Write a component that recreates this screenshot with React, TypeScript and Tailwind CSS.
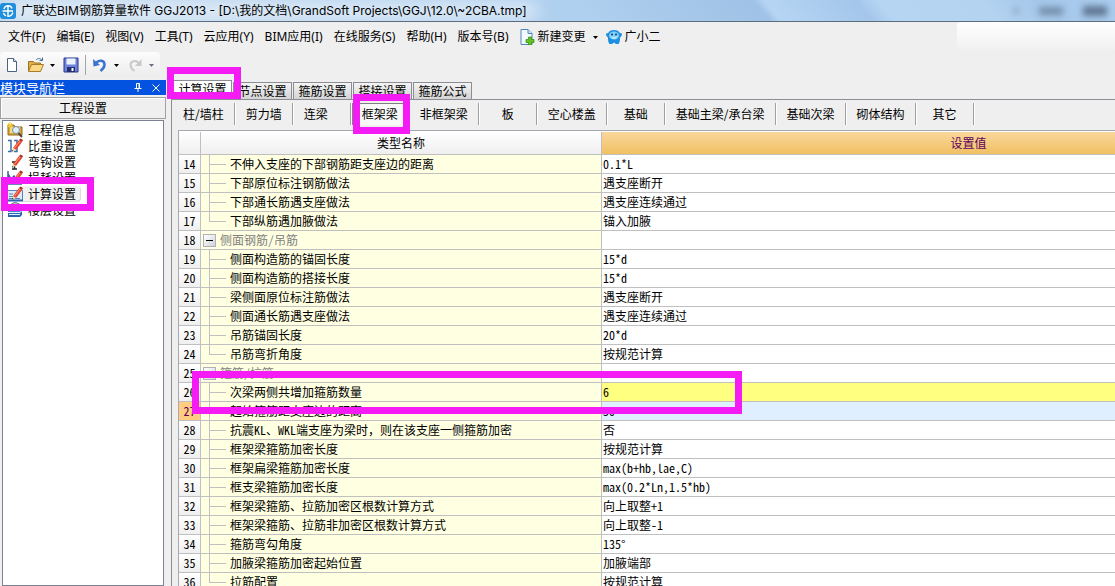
import type { ReactNode } from "react";
import clsx from "clsx";

interface Row {
  no: number;
  name: string;
  value: string;
  kind?: "group" | "last";
}

const menus = [
  "文件(F)",
  "编辑(E)",
  "视图(V)",
  "工具(T)",
  "云应用(Y)",
  "BIM应用(I)",
  "在线服务(S)",
  "帮助(H)",
  "版本号(B)",
];

const tabs = ["计算设置", "节点设置", "箍筋设置", "搭接设置", "箍筋公式"];

const members = [
  "柱/墙柱",
  "剪力墙",
  "连梁",
  "框架梁",
  "非框架梁",
  "板",
  "空心楼盖",
  "基础",
  "基础主梁/承台梁",
  "基础次梁",
  "砌体结构",
  "其它",
];

const rows: Row[] = [
  { no: 14, name: "不伸入支座的下部钢筋距支座边的距离", value: "0.1*L" },
  { no: 15, name: "下部原位标注钢筋做法", value: "遇支座断开" },
  { no: 16, name: "下部通长筋遇支座做法", value: "遇支座连续通过" },
  { no: 17, name: "下部纵筋遇加腋做法", value: "锚入加腋", kind: "last" },
  { no: 18, name: "侧面钢筋/吊筋", value: "", kind: "group" },
  { no: 19, name: "侧面构造筋的锚固长度", value: "15*d" },
  { no: 20, name: "侧面构造筋的搭接长度", value: "15*d" },
  { no: 21, name: "梁侧面原位标注筋做法", value: "遇支座断开" },
  { no: 22, name: "侧面通长筋遇支座做法", value: "遇支座连续通过" },
  { no: 23, name: "吊筋锚固长度", value: "20*d" },
  { no: 24, name: "吊筋弯折角度", value: "按规范计算", kind: "last" },
  { no: 25, name: "箍筋/拉筋", value: "", kind: "group" },
  { no: 26, name: "次梁两侧共增加箍筋数量", value: "6" },
  { no: 27, name: "起始箍筋距支座边的距离", value: "50" },
  { no: 28, name: "抗震KL、WKL端支座为梁时，则在该支座一侧箍筋加密", value: "否" },
  { no: 29, name: "框架梁箍筋加密长度", value: "按规范计算" },
  { no: 30, name: "框架扁梁箍筋加密长度", value: "max(b+hb,lae,C)" },
  { no: 31, name: "框支梁箍筋加密长度", value: "max(0.2*Ln,1.5*hb)" },
  { no: 32, name: "框架梁箍筋、拉筋加密区根数计算方式", value: "向上取整+1" },
  { no: 33, name: "框架梁箍筋、拉筋非加密区根数计算方式", value: "向上取整-1" },
  { no: 34, name: "箍筋弯勾角度", value: "135°" },
  { no: 35, name: "加腋梁箍筋加密起始位置", value: "加腋端部" },
  { no: 36, name: "拉筋配置", value: "按规范计算", kind: "last" },
];

const Pencil = () => (
  <>
    <path d="M6 10 L12 2 L15 4 L9 12 Z" fill="#e8452c" />
    <path d="M12 2 L13.5 .5 L16 2 L15 4 Z" fill="#b02a20" />
    <path d="M7.5 10 L13 3" stroke="#ff9a7a" />
    <path d="M6 10 L5 13.500 L9 12 Z" fill="#f4d9a8" />
    <path d="M5 13.500 L5.500 11.800 L6.500 12.900 Z" fill="#222" />
  </>
);

const navItems: { label: string; icon: ReactNode }[] = [
  {
    label: "工程信息",
    icon: (
      <>
        <path d="M1 3h6l1 2h7v8H1z" fill="#d9a93c" stroke="#8f6b1b" />
        <path d="M3 5h10v6H3z" fill="#f3d98b" />
        <path d="M3 0v6M0 3h6M1 1l4 4M5 1L1 5" stroke="#f5d13a" />
        <circle cx="9" cy="8" r="3.500" fill="#dff0fb" stroke="#7790a8" />
        <path d="M11.500 11l3.500 4" stroke="#5b4a3a" strokeWidth="2" />
      </>
    ),
  },
  {
    label: "比重设置",
    icon: (
      <>
        <path
          d="M1 2.500h3v11H1M7 2.500h3v11H7"
          fill="none"
          stroke="#3b6ea8"
          strokeWidth="1.500"
        />
        <Pencil />
      </>
    ),
  },
  {
    label: "弯钩设置",
    icon: (
      <>
        <path
          d="M5 8h5M7.500 8v7M5 15h5"
          fill="none"
          stroke="#222"
          strokeWidth="1.500"
        />
        <Pencil />
      </>
    ),
  },
  {
    label: "损耗设置",
    icon: (
      <>
        <path
          d="M1 1v13h14M1 4l3 5 3-3 3 6 5-3"
          fill="none"
          stroke="#3b5fa8"
          strokeWidth="1.500"
        />
        <Pencil />
      </>
    ),
  },
  {
    label: "计算设置",
    icon: (
      <>
        <path d="M.5 4.500h15v10H.5z" fill="#dcebfa" stroke="#5584c0" />
        <path d="M2 8h4M2 10.500h8M2 12.500h11" stroke="#5584c0" />
        <path d="M0 14.500h16" stroke="#2e63ad" strokeWidth="2" />
        <Pencil />
      </>
    ),
  },
  {
    label: "楼层设置",
    icon: (
      <>
        <path d="M3 3l5-3 6 3v3H3z" fill="#b9c4cf" stroke="#6b7785" />
        <path d="M1 7h12l2-2v3l-2 2H1z" fill="#3f86cf" />
        <path d="M1 11h12l2-2v4l-2 2H1z" fill="#2765b0" />
        <path d="M2 10.500h11M2 12.500h11" stroke="#e5f1fc" />
      </>
    ),
  },
];

const Icon = ({ children }: { children: ReactNode }) => (
  <svg viewBox="0 0 16 16" className="size-4 shrink-0" aria-hidden="true">
    {children}
  </svg>
);

const Caret = ({ muted }: { muted?: boolean }) => (
  <svg
    viewBox="0 0 5 3"
    className={clsx("h-[3px] w-[5px]", muted ? "text-gray-500" : "text-black")}
    aria-hidden="true"
  >
    <path d="M0 0h5L2.500 3z" fill="currentColor" />
  </svg>
);

const TitleBar = () => (
  <header className="relative flex h-[22px] shrink-0 items-center overflow-hidden border-b border-[#5d6b7e] bg-linear-to-r from-[#c3d9ee] via-[#b0d0ef] to-[#abcbea]">
    <div className="absolute inset-0 bg-[linear-gradient(50deg,transparent_52%,#9fc2e6_68%,#b6d5f3_69%,#a3c6ea_77%,#b6d5f3_79%,#b4d3f1_88%,#a5c7e9_93%,#aaccee_100%)]" />
    <div className="absolute left-2 h-4 w-[530px] rounded-full bg-white/60 blur-sm" />
    <svg viewBox="0 0 16 16" className="relative size-4" aria-hidden="true">
      <rect width="16" height="16" rx="3" fill="#1f8fdc" />
      <path
        d="M13 9.500C12 12 10 13.300 8 13.300V2.500M2.500 8h10.500M4 6C4.500 4 6 2.700 8 2.700S11.500 4 12 5.500M3.500 10c.5 1.300 1.500 2.300 2.500 2.800"
        fill="none"
        stroke="#fff"
        strokeWidth="1.400"
      />
    </svg>
    <h1 className="relative ml-[5px] font-['Inter','Noto_Sans_CJK_SC',sans-serif] text-xs whitespace-pre">
      广联达BIM钢筋算量软件 GGJ2013 - [D:\我的文档\GrandSoft Projects\GGJ\12.0\~2CBA.tmp]
    </h1>
    <div className="relative mr-2 ml-auto flex items-center gap-5 blur-[3px]">
      <span className="size-1.5 bg-slate-500/40" />
      <span className="h-2 w-6 bg-slate-600/50" />
      <span className="h-2.5 w-6 bg-slate-700/60" />
    </div>
  </header>
);

const MenuBar = () => (
  <nav className="flex h-[30px] shrink-0 items-center pl-2 text-xs">
    <div className="flex gap-[11px]">
      {menus.map((m) => (
        <button key={m} type="button" className="whitespace-nowrap">
          {m}
        </button>
      ))}
    </div>
    <button type="button" className="ml-2.5 flex items-center gap-[3px] whitespace-nowrap">
      <Icon>
        <path d="M2 .5h7l4 4v11H2z" fill="#f4faff" stroke="#4d86c0" />
        <path d="M9 .5v4h4" fill="#cfe3f6" stroke="#4d86c0" />
        <path
          d="M9.500 8h3v2.500H15v3h-2.500V16h-3v-2.500H7v-3h2.500z"
          fill="#63c421"
          stroke="#2e8a12"
          strokeWidth=".7"
        />
      </Icon>
      新建变更
      <span className="ml-1">
        <Caret />
      </span>
    </button>
    <button type="button" className="ml-2 flex items-center gap-[3px] whitespace-nowrap">
      <Icon>
        <path
          d="M8 1c3 0 5 1 5.800 3L16 4.500c0 2-.8 3.500-2 4 0 2 .2 4-1.500 6.500H10l-2-1.500L6 15H3.500C1.800 12.500 2 10.500 2 8.500.8 8 0 6.500 0 4.500L2.200 4C3 2 5 1 8 1z"
          fill="#1e8fe0"
        />
        <ellipse cx="8" cy="6.500" rx="5" ry="4" fill="#7fd0fa" />
        <circle cx="6" cy="5.500" r="1" fill="#0b3c70" />
        <circle cx="10" cy="5.500" r="1" fill="#0b3c70" />
        <path d="M5.500 8c1.500 1.500 3.500 1.500 5 0" fill="none" stroke="#fff" />
      </Icon>
      广小二
    </button>
    <div className="ml-auto h-full w-[158px] rounded-tl bg-linear-to-b from-white to-[#efefef]" />
  </nav>
);

const ToolBar = () => (
  <div className="flex h-7 shrink-0 items-start">
    <div className="flex h-[26px] w-40 items-center rounded bg-linear-to-b from-[#fcfcfc] to-[#ececec] pl-1">
      <button type="button" aria-label="新建">
        <Icon>
          <path d="M3.500 1.500h6l3 3v10h-9z" fill="#fff" stroke="#4b6285" />
          <path d="M9.500 1.500v3h3" fill="#dbe6f5" stroke="#4b6285" />
        </Icon>
      </button>
      <button type="button" aria-label="打开" className="ml-2 flex items-center gap-1.5">
        <Icon>
          <path d="M.5 4.500h5l1 1.500h6v8H.5z" fill="#e3b04b" stroke="#9a7220" />
          <path d="M.5 14.500l3-7h12l-3 7z" fill="#fbd984" stroke="#a87c28" />
          <path d="M8 3c2-2 4-2 6 0M14.500.5v3h-3" fill="none" stroke="#47688f" />
        </Icon>
        <Caret />
      </button>
      <button type="button" aria-label="保存" className="ml-2">
        <Icon>
          <path d="M1 1h14v14H1z" fill="#6f83dc" stroke="#27358c" />
          <path d="M3.500 1.500h9v6h-9z" fill="#eef2fc" />
          <path d="M4 10h8v5H4z" fill="#23306f" />
          <path d="M8.500 11h2v3h-2z" fill="#fff" />
        </Icon>
      </button>
      <span className="mx-1.5 h-5 w-px bg-[#a5a5a5]" />
      <button type="button" aria-label="撤销" className="flex items-center gap-1.5">
        <Icon>
          <path
            d="M4 6C6.500 2.500 12.500 3 12.500 7.500c0 3-2 5-4 6.500"
            fill="none"
            stroke="#3b74cf"
            strokeWidth="2.500"
          />
          <path d="M1 2l.5 7.500L8 8z" fill="#3b74cf" />
        </Icon>
        <Caret />
      </button>
      <button
        type="button"
        aria-label="恢复"
        disabled
        className="ml-2 flex items-center gap-1.5"
      >
        <Icon>
          <path
            d="M11.500 6C9 3 3.500 3.500 3.500 8c0 2.500 2 4.500 4 6"
            fill="none"
            stroke="#c9c9c9"
            strokeWidth="2"
          />
          <path d="M14.500 2v7H8z" fill="#c9c9c9" />
        </Icon>
        <Caret muted />
      </button>
    </div>
  </div>
);

const Sidebar = () => (
  <aside className="flex w-[166px] shrink-0 flex-col">
    <div className="flex h-[15px] shrink-0 items-center bg-[#0453e0] text-[13px] leading-none text-white">
      <h2 className="mr-auto">模块导航栏</h2>
      <button type="button" aria-label="固定" className="mr-2.5">
        <svg viewBox="0 0 8 9" className="h-[9px] w-2" aria-hidden="true">
          <path
            d="M2.500 5V.5h3V5M5 .5V5M.5 5.500h7M4 5.500V9"
            fill="none"
            stroke="#fff"
          />
        </svg>
      </button>
      <button type="button" aria-label="关闭" className="mr-1.5">
        <svg viewBox="0 0 8 8" className="size-2" aria-hidden="true">
          <path d="M.5.5l7 7M7.500.5l-7 7" stroke="#fff" />
        </svg>
      </button>
    </div>
    <button
      type="button"
      className="mt-0.5 h-[22px] shrink-0 border border-[#a0a0a0] bg-[#efefef] text-xs shadow-[inset_1px_1px_0_#fff]"
    >
      工程设置
    </button>
    <ul className="mx-0.5 mt-px grow border border-[#7b8190] bg-white pt-px">
      {navItems.map((item) => (
        <li key={item.label}>
          <button
            type="button"
            className="flex h-4 items-center pl-1 text-xs whitespace-nowrap"
          >
            <Icon>{item.icon}</Icon>
            <span
              className={clsx(
                "rounded-r px-[5px] leading-4",
                item.label === "计算设置" &&
                  "bg-[#f0f0f0] shadow-[inset_-1px_-1px_0_#dcdcdc]"
              )}
            >
              {item.label}
            </span>
          </button>
        </li>
      ))}
    </ul>
  </aside>
);

const TabStrip = () => (
  <div role="tablist" className="flex h-5 shrink-0 items-end border-b border-[#8c8c94] pl-px">
    {tabs.map((tab, i) => (
      <button
        key={tab}
        type="button"
        role="tab"
        aria-selected={i === 0}
        className={clsx(
          "mr-px w-[59px] border border-b-0 border-[#8c8c94] text-xs whitespace-nowrap",
          i === 0
            ? "h-[19px] bg-white pb-1"
            : "h-[17px] bg-linear-to-b from-[#f4f4f4] to-[#d4d4d4]"
        )}
      >
        {tab}
      </button>
    ))}
  </div>
);

const MemberBar = () => (
  <div className="mt-[3px] flex h-[22px] shrink-0 pl-px text-xs">
    {members.map((m) => (
      <button
        key={m}
        type="button"
        className={clsx(
          "min-w-[58px] shrink-0 border-r border-white whitespace-nowrap",
          m === "框架梁" && "bg-[#f8f8f8] shadow-[inset_1px_1px_0_#808080]"
        )}
      >
        <span
          className={clsx(
            "flex h-full items-center border-r border-[#a0a0a0] px-2.5",
            m === "连梁" ? "justify-start" : "justify-center"
          )}
        >
          {m}
        </span>
      </button>
    ))}
  </div>
);

// Latin runs use half-width glyphs, Chinese text and punctuation stay full width.
const GridText = ({ text }: { text: string }) => (
  <>
    {text.split(/([\x20-\x7e°]+)/).map((part, i) =>
      i % 2 ? (
        <span key={i} className="[font-feature-settings:'hwid']">
          {part}
        </span>
      ) : (
        part
      )
    )}
  </>
);

const NameCell = ({ row }: { row: Row }) => {
  if (row.kind === "group") {
    return (
      <div className="flex h-[18px] items-center pl-0.5 text-[#808080]">
        <button
          type="button"
          aria-label="折叠"
          className="mr-1 flex size-[13px] items-center justify-center border border-[#b0b0b8] bg-linear-to-br from-white to-[#cfd3dc]"
        >
          <span className="h-px w-[7px] bg-black" />
        </button>
        <span>
          <GridText text={row.name} />
        </span>
      </div>
    );
  }
  return (
    <div className="flex h-[18px] items-center">
      <span className="relative ml-2 h-[19px] w-[17px] shrink-0">
        <span
          className={clsx(
            "absolute top-0 left-0 w-px bg-[#c0c0c0]",
            row.kind === "last" ? "h-[9px]" : "h-[19px]"
          )}
        />
        <span className="absolute top-[9px] left-0 h-px w-full bg-[#c0c0c0]" />
      </span>
      <span className="ml-1">
        <GridText text={row.name} />
      </span>
    </div>
  );
};

const SettingsTable = () => (
  <div className="mt-[5px] ml-[6px] min-h-0 grow overflow-hidden border-t border-l border-[#a8a8b0] bg-white pt-px">
    <table className="w-[1156px] table-fixed border-separate border-spacing-0 text-xs whitespace-nowrap">
      <colgroup>
        <col className="w-[22px]" />
        <col className="w-[401px]" />
        <col />
      </colgroup>
      <thead>
        <tr className="h-[23px]">
          <th className="border-r border-b border-[#c0c0c0] bg-linear-to-b from-white to-[#efefef] p-0" />
          <th className="border-r border-b border-[#c0c0c0] bg-linear-to-b from-white to-[#efefef] p-0 font-normal">
            类型名称
          </th>
          <th className="border-b border-[#c0c0c0] bg-linear-to-b from-[#f9d79b] to-[#f1c062] p-0 font-normal text-[#5c005c]">
            设置值
          </th>
        </tr>
      </thead>
      <tbody>
        {rows.map((row) => (
          <tr key={row.no} className="h-[19px] leading-[18px]">
            <td
              className={clsx(
                "border-r border-b border-[#c0c0c0] p-0 text-center",
                row.no === 27
                  ? "bg-[#ffcc80] text-[#5c005c]"
                  : "bg-linear-to-b from-white to-[#efefef]"
              )}
            >
              <GridText text={String(row.no)} />
            </td>
            <td className="border-r border-b border-[#c0c0c0] bg-[#ffffe1] p-0">
              <NameCell row={row} />
            </td>
            <td
              className={clsx(
                "border-b border-[#c0c0c0] p-0 pl-px",
                row.no === 26 && "bg-[#ffff80]",
                row.no === 27 && "bg-[#e0efff]"
              )}
            >
              <GridText text={row.value} />
            </td>
          </tr>
        ))}
      </tbody>
    </table>
  </div>
);

// Highlight frames laid over the window to point at a step.
const frames = [
  "left-[167px] top-[67px] h-[32px] w-[74px]",
  "left-[353px] top-[94px] h-[40px] w-[57px]",
  "left-[1px] top-[177px] h-[34px] w-[93px]",
  "left-[192px] top-[371px] h-[43px] w-[550px]",
];

const App = () => {
  return (
    <div className="relative flex h-screen flex-col overflow-hidden bg-[#efefef] font-['Noto_Sans','Noto_Sans_CJK_SC',sans-serif] text-black">
      <TitleBar />
      <MenuBar />
      <ToolBar />
      <div className="flex min-h-0 grow font-['Noto_Sans_CJK_SC',sans-serif]">
        <Sidebar />
        <main className="ml-[5px] flex min-w-0 grow flex-col border-l border-[#8c8c94]">
          <TabStrip />
          <MemberBar />
          <SettingsTable />
        </main>
      </div>
      {frames.map((frame) => (
        <div
          key={frame}
          className={clsx("pointer-events-none absolute border-[7px] border-[#f41bf4]", frame)}
        />
      ))}
    </div>
  );
};

export default App;
